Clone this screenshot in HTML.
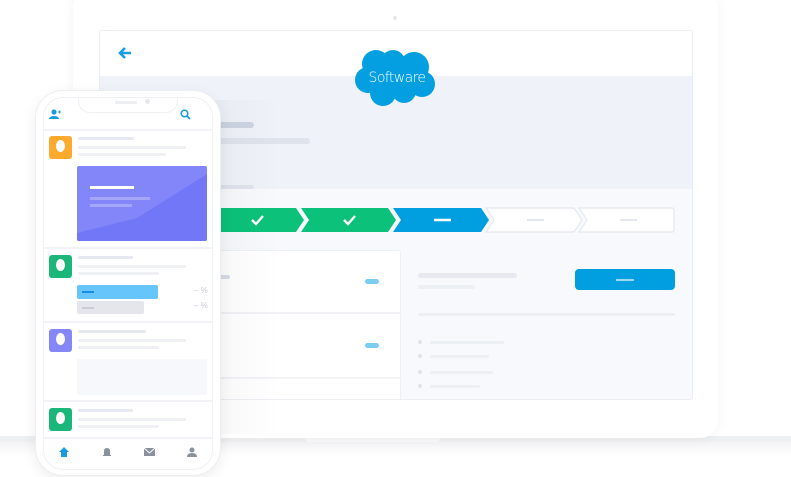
<!DOCTYPE html>
<html><head><style>
*{margin:0;padding:0;box-sizing:border-box}
body{width:791px;height:477px;background:#fff;position:relative;overflow:hidden;font-family:"Liberation Sans",sans-serif}
.a{position:absolute}
.bar{position:absolute;border-radius:3px;background:#e6e9f0}
</style></head><body>
<!-- laptop base -->
<div class="a" style="left:0;top:436px;width:791px;height:6px;background:#eeeff1"></div>
<div class="a" style="left:0;top:442px;width:791px;height:14px;background:linear-gradient(#f3f3f5,#fff)"></div>
<div class="a" style="left:305px;top:436px;width:135px;height:6px;background:#f8f8f9;border-radius:0 0 4px 4px"></div>
<!-- laptop lid -->
<div class="a" style="left:73px;top:-10px;width:645px;height:448px;background:#fff;border-radius:18px;box-shadow:0 0 12px rgba(0,0,0,0.05)"></div>
<div class="a" style="left:393px;top:16px;width:4px;height:4px;border-radius:50%;background:#e4e6ea"></div>
<!-- screen -->
<div class="a" style="left:99px;top:30px;width:594px;height:370px;border:1px solid #eceef3;border-radius:3px;background:#f8f9fc;overflow:hidden">
 <div class="a" style="left:0;top:0;width:594px;height:45px;background:#fff"></div>
 <div class="a" style="left:0;top:45px;width:594px;height:113px;background:#eff2f9"></div>
 <svg class="a" style="left:17px;top:15px" width="16" height="14"><path d="M14 7H3M8 2L3 7l5 5" stroke="#1a9be0" stroke-width="2.6" fill="none"/></svg>
 <div class="bar" style="left:110px;top:91px;width:44px;height:6px;background:#ccd4e2"></div>
 <div class="bar" style="left:110px;top:107px;width:100px;height:6px;background:#dfe3ec"></div>
 <div class="bar" style="left:110px;top:154px;width:44px;height:4px;background:#dfe3ec"></div>
 <!-- stepper -->
 <svg class="a" style="left:0;top:176px" width="594" height="26">
  <path d="M20 1H196L204 13L196 25H20Z" fill="#0cc27a"/>
  <path d="M201 1H288L296 13L288 25H201L209 13Z" fill="#0cc27a"/>
  <path d="M293 1H381L389 13L381 25H293L301 13Z" fill="#019fe0"/>
  <path d="M386 1H474L482 13L474 25H386L394 13Z" fill="#fff" stroke="#e8ebf1" stroke-width="1.5"/>
  <path d="M479 1H572Q574 1 574 4V22Q574 25 572 25H479L487 13Z" fill="#fff" stroke="#e8ebf1" stroke-width="1.5"/>
  <path d="M152 13l4 4 7-8M244 13l4 4 7-8" stroke="#fff" stroke-width="2.4" fill="none"/>
  <path d="M334 13h17" stroke="#fff" stroke-width="2.4"/>
  <path d="M427 13h17M520 13h17" stroke="#e4e7ee" stroke-width="2"/>
 </svg>
 <!-- left card -->
 <div class="a" style="left:20px;top:219px;width:281px;height:160px;background:#fff;border:1px solid #eef0f5;border-radius:3px"></div>
 <div class="a" style="left:20px;top:281px;width:281px;height:2px;background:#f0f2f6"></div>
 <div class="a" style="left:20px;top:346px;width:281px;height:2px;background:#f0f2f6"></div>
 <div class="bar" style="left:110px;top:244px;width:20px;height:4px;background:#d9dde6"></div>
 <div class="bar" style="left:265px;top:248px;width:14px;height:5px;background:#7accf0"></div>
 <div class="bar" style="left:265px;top:312px;width:14px;height:5px;background:#7accf0"></div>
 <!-- right -->
 <div class="bar" style="left:318px;top:242px;width:99px;height:5px"></div>
 <div class="bar" style="left:318px;top:254px;width:57px;height:4px;background:#eceff4"></div>
 <div class="a" style="left:475px;top:238px;width:100px;height:21px;background:#019fe0;border-radius:4px"></div>
 <div class="a" style="left:516px;top:248px;width:18px;height:2px;background:#9fd8f3"></div>
 <div class="bar" style="left:318px;top:282px;width:257px;height:3px;background:#eceff4"></div>
 <div class="a" style="left:318px;top:309px;width:4px;height:4px;border-radius:50%;background:#dfe3eb"></div>
 <div class="bar" style="left:330px;top:310px;width:74px;height:3px;background:#eceff4"></div>
 <div class="a" style="left:318px;top:323px;width:4px;height:4px;border-radius:50%;background:#dfe3eb"></div>
 <div class="bar" style="left:330px;top:324px;width:59px;height:3px;background:#eceff4"></div>
 <div class="a" style="left:318px;top:339px;width:4px;height:4px;border-radius:50%;background:#dfe3eb"></div>
 <div class="bar" style="left:330px;top:340px;width:63px;height:3px;background:#eceff4"></div>
 <div class="a" style="left:318px;top:353px;width:4px;height:4px;border-radius:50%;background:#dfe3eb"></div>
 <div class="bar" style="left:330px;top:354px;width:50px;height:3px;background:#eceff4"></div>
</div>
<!-- cloud -->
<svg class="a" style="left:354px;top:47px" width="86" height="62">
 <g fill="#039fe1">
  <circle cx="22" cy="17" r="14"/><circle cx="39" cy="15" r="12"/><circle cx="60" cy="20" r="15"/>
  <circle cx="68" cy="37" r="13"/><circle cx="50" cy="44" r="12"/><circle cx="29" cy="46" r="13"/>
  <circle cx="14" cy="33" r="13"/><rect x="18" y="18" width="50" height="28"/>
 </g>
 <text x="43" y="35" fill="#fff" font-size="14" text-anchor="middle" font-family="DejaVu Sans, sans-serif" font-weight="300" letter-spacing="-0.6">Software</text>
</svg>
<!-- phone shadow -->
<div class="a" style="left:190px;top:100px;width:90px;height:334px;background:linear-gradient(90deg,rgba(0,0,0,0.04),rgba(0,0,0,0));"></div>
<!-- phone -->
<div class="a" style="left:35px;top:90px;width:186px;height:386px;background:#fff;border:1px solid #eceef2;border-radius:28px;box-shadow:0 4px 14px rgba(0,0,0,0.07)"></div>
<div class="a" style="left:43px;top:97px;width:170px;height:373px;border:1.5px solid #eef0f4;border-radius:20px;background:#fff;overflow:hidden">
 <div class="a" style="left:34px;top:-2px;width:100px;height:17px;border:1.5px solid #eef0f4;border-top:none;border-radius:0 0 12px 12px;background:#fff"></div>
 <div class="a" style="left:71px;top:3px;width:22px;height:3px;border-radius:2px;background:#eceef2"></div>
 <div class="a" style="left:101px;top:1px;width:5px;height:5px;border-radius:50%;background:#e6e8ec"></div>
 <svg class="a" style="left:5px;top:11px" width="12" height="10"><circle cx="5" cy="3" r="2.6" fill="#1a9be0"/><path d="M0 10c0-4 10-4 10 0z" fill="#1a9be0"/><path d="M9 3h3M10.5 1.5v3" stroke="#1a9be0"/></svg>
 <svg class="a" style="left:136px;top:11px" width="11" height="11"><circle cx="4.5" cy="4.5" r="3.3" stroke="#1a9be0" stroke-width="1.5" fill="none"/><path d="M7 7l3 3" stroke="#1a9be0" stroke-width="1.8"/></svg>
 <div class="a" style="left:0;top:31px;width:170px;height:2px;background:#f2f3f6"></div>
 <!-- post1 -->
 <div class="a" style="left:5px;top:38px;width:23px;height:23px;border-radius:3px;background:#fbaa2e"></div>
 <div class="a" style="left:12px;top:42px;width:9px;height:12px;border-radius:50%;background:#fff"></div>
 <div class="bar" style="left:34px;top:39px;width:56px;height:3px"></div>
 <div class="bar" style="left:34px;top:48px;width:108px;height:3px;background:#eef0f4"></div>
 <div class="bar" style="left:34px;top:55px;width:88px;height:3px;background:#eef0f4"></div>
 <svg class="a" style="left:33px;top:68px" width="130" height="75"><rect width="130" height="75" rx="2" fill="#8286f9"/><path d="M0 67L60 52L130 8V73Q130 75 128 75H2Q0 75 0 73Z" fill="#7277f7"/><rect x="13" y="20" width="44" height="3" fill="#fff"/><rect x="13" y="31" width="60" height="3" fill="#a3a6fb"/><rect x="13" y="38" width="42" height="3" fill="#a3a6fb"/></svg>
 <div class="a" style="left:0;top:149px;width:170px;height:2px;background:#f2f3f6"></div>
 <!-- post2 -->
 <div class="a" style="left:5px;top:157px;width:23px;height:23px;border-radius:3px;background:#1bb67a"></div>
 <div class="a" style="left:12px;top:161px;width:9px;height:12px;border-radius:50%;background:#fff"></div>
 <div class="bar" style="left:34px;top:158px;width:55px;height:3px"></div>
 <div class="bar" style="left:34px;top:167px;width:108px;height:3px;background:#eef0f4"></div>
 <div class="bar" style="left:34px;top:174px;width:81px;height:3px;background:#eef0f4"></div>
 <div class="a" style="left:33px;top:187px;width:81px;height:14px;border-radius:2px;background:#66c5fb"></div>
 <div class="a" style="left:38px;top:193px;width:12px;height:2px;background:#1a8ce8"></div>
 <div class="a" style="left:33px;top:203px;width:67px;height:13px;border-radius:2px;background:#e4e6ec"></div>
 <div class="a" style="left:38px;top:209px;width:12px;height:2px;background:#c9ccd4"></div>
 <div class="a" style="left:150px;top:188px;font-size:8px;color:#c8ccd4">–&nbsp;%</div>
 <div class="a" style="left:150px;top:203px;font-size:8px;color:#c8ccd4">–&nbsp;%</div>
 <div class="a" style="left:0;top:223px;width:170px;height:2px;background:#f2f3f6"></div>
 <!-- post3 -->
 <div class="a" style="left:5px;top:231px;width:23px;height:23px;border-radius:3px;background:#8586f8"></div>
 <div class="a" style="left:12px;top:235px;width:9px;height:12px;border-radius:50%;background:#fff"></div>
 <div class="bar" style="left:34px;top:232px;width:68px;height:3px"></div>
 <div class="bar" style="left:34px;top:241px;width:108px;height:3px;background:#eef0f4"></div>
 <div class="bar" style="left:34px;top:248px;width:81px;height:3px;background:#eef0f4"></div>
 <div class="a" style="left:33px;top:261px;width:130px;height:36px;border-radius:2px;background:#f7f8fb"></div>
 <div class="a" style="left:0;top:302px;width:170px;height:2px;background:#f2f3f6"></div>
 <!-- post4 -->
 <div class="a" style="left:5px;top:310px;width:23px;height:23px;border-radius:3px;background:#1bb67a"></div>
 <div class="a" style="left:12px;top:314px;width:9px;height:12px;border-radius:50%;background:#fff"></div>
 <div class="bar" style="left:34px;top:311px;width:55px;height:3px"></div>
 <div class="bar" style="left:34px;top:320px;width:108px;height:3px;background:#eef0f4"></div>
 <div class="bar" style="left:34px;top:327px;width:81px;height:3px;background:#eef0f4"></div>
 <div class="a" style="left:0;top:339px;width:170px;height:2px;background:#f2f3f6"></div>
 <!-- tabs -->
 <svg class="a" style="left:15px;top:349px" width="10" height="10"><path d="M5 0L10 5H8V10H2V5H0Z" fill="#1a9be0"/></svg>
 <svg class="a" style="left:58px;top:349px" width="10" height="10"><path d="M2 8V4Q2 1 5 1Q8 1 8 4V8H9V9H1V8Z" fill="#8a909c"/></svg>
 <svg class="a" style="left:100px;top:349px" width="11" height="10"><path d="M0 1H11V9H0Z" fill="#8a909c"/><path d="M0 1L5.5 6L11 1" stroke="#fff" fill="none"/></svg>
 <svg class="a" style="left:143px;top:349px" width="10" height="10"><circle cx="5" cy="3" r="2.5" fill="#8a909c"/><path d="M0 10Q0 6 5 6Q10 6 10 10Z" fill="#8a909c"/></svg>
</div>
</body></html>
